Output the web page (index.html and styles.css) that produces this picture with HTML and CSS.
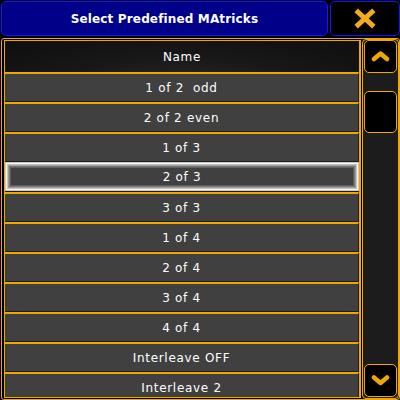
FILE: index.html
```html
<!DOCTYPE html>
<html>
<head>
<meta charset="utf-8">
<title>Select Predefined MAtricks</title>
<link rel="stylesheet" href="styles.css">
</head>
<body>
<div class="top">
    <div class="title">Select Predefined MAtricks</div>
    <div class="close">
        <svg width="70" height="35" viewBox="0 0 70 35">
            <g class="glow" stroke="#f2ab1c" stroke-width="5" stroke-linecap="square">
                <line x1="28" y1="11" x2="42" y2="24"/>
                <line x1="42" y1="11" x2="28" y2="24"/>
            </g>
        </svg>
    </div>
</div>
<div class="frame">
    <div class="list">
        <div class="head">Name</div>
        <div class="row">1 of 2  odd</div>
        <div class="row">2 of 2 even</div>
        <div class="row">1 of 3</div>
        <div class="row sel">2 of 3</div>
        <div class="row">3 of 3</div>
        <div class="row">1 of 4</div>
        <div class="row">2 of 4</div>
        <div class="row">3 of 4</div>
        <div class="row">4 of 4</div>
        <div class="row">Interleave OFF</div>
        <div class="row">Interleave 2</div>
    </div>
    <div class="scroll">
        <div class="btn">
            <svg width="31" height="31" viewBox="0 0 31 31">
                <polyline class="glow" points="9,18 15.5,12.5 22,18" fill="none" stroke="#f0a800" stroke-width="4.5" stroke-linecap="round" stroke-linejoin="round"/>
            </svg>
        </div>
        <div class="track"><div class="thumb"></div></div>
        <div class="btn">
            <svg width="31" height="31" viewBox="0 0 31 31">
                <polyline class="glow" points="9,12.5 15.5,18 22,12.5" fill="none" stroke="#f0a800" stroke-width="4.5" stroke-linecap="round" stroke-linejoin="round"/>
            </svg>
        </div>
    </div>
</div>
</body>
</html>
```

FILE: styles.css
```css
body {
    margin: 0;
    width: 400px;
    height: 400px;
    overflow: hidden;
    background: #000;
    color: #fff;
    font-family: "DejaVu Sans", sans-serif;
    font-size: 12px;
    letter-spacing: 0.7px;
}

.top {
    display: flex;
    gap: 2px;
    padding: 1px 0 0 1px;
    height: 35px;
}

.title {
    width: 327px;
    box-sizing: border-box;
    background: #000088;
    border: 1px solid #1414f5;
    border-radius: 5px;
    display: flex;
    align-items: center;
    justify-content: center;
    font-weight: bold;
    font-size: 12px;
    letter-spacing: 0.15px;
}

.close {
    width: 70px;
    box-sizing: border-box;
    background: #000;
    border: 1px solid #1414f5;
    border-radius: 5px;
    overflow: hidden;
}

.close svg {
    display: block;
    margin: -1px;
}

.glow {
    filter: blur(0.4px);
}

.frame {
    margin: 2px 0 0 1px;
    width: 399px;
    height: 362px;
    box-sizing: border-box;
    border: 1px solid #f0a800;
    border-radius: 3px;
    padding-left: 2px;
    display: flex;
    gap: 1px;
}

.list {
    width: 357px;
    margin: 1px 0;
    box-sizing: border-box;
    border: 1px solid #f0a800;
    border-right-width: 2px;
    overflow: hidden;
    background: #404040;
}

.head {
    height: 29px;
    padding-top: 2px;
    line-height: 29px;
    text-align: center;
    background: radial-gradient(ellipse at 50% 120%, #232323 0%, #171717 45%, #0e0e0e 100%);
}

.row {
    height: 26px;
    padding-top: 1px;
    line-height: 27px;
    text-align: center;
    white-space: pre;
    border-top: 2px solid #f0a800;
    border-bottom: 1px solid #1c1c1c;
    border-right: 1px solid #1c1c1c;
    background: #404040;
}

.row.sel {
    border-top: 0;
    height: 28px;
    line-height: 29px;
    border-right: 0;
    box-shadow: inset 0 0 0 1px #c8c8c8, inset 0 0 0 2px #f4f4f4, inset 0 0 0 3px #c4c4c4,
        inset 0 0 0 4px #9a9a9a, inset 0 0 0 5px #7a7a7a, inset 0 0 0 6px #5c5c5c;
}

.scroll {
    width: 37px;
    box-sizing: border-box;
    border: 1px solid #f0a800;
    border-radius: 4px;
    background: #1c1c1c;
    padding: 0 1px 1px;
    display: flex;
    flex-direction: column;
}

.btn {
    height: 33px;
    box-sizing: border-box;
    background: #000;
    border: 1px solid #f0a800;
    border-radius: 5px;
}

.btn svg {
    display: block;
}

.track {
    flex: 1;
}

.thumb {
    margin-top: 18px;
    height: 42px;
    box-sizing: border-box;
    background: #000;
    border: 1px solid #f0a800;
    border-radius: 5px;
}
```
